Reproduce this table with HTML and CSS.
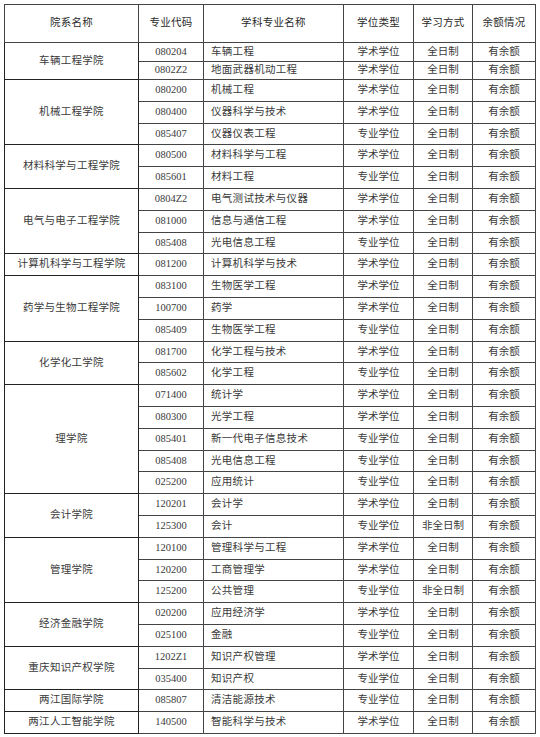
FILE: index.html
```html
<!DOCTYPE html>
<html lang="zh">
<head>
<meta charset="utf-8">
<link rel="stylesheet" href="styles.css">
</head>
<body>
<table class="tbl">
<colgroup>
<col class="c1"><col class="c2"><col class="c3"><col class="c4"><col class="c5"><col class="c6">
</colgroup>
<thead>
<tr class="head"><th>院系名称</th><th>专业代码</th><th>学科专业名称</th><th>学位类型</th><th>学习方式</th><th>余额情况</th></tr>
</thead>
<tbody>
<tr class="r19"><td class="dept" rowspan="2">车辆工程学院</td><td class="code">080204</td><td class="name">车辆工程</td><td>学术学位</td><td>全日制</td><td>有余额</td></tr>
<tr class="r18"><td class="code">0802Z2</td><td class="name">地面武器机动工程</td><td>学术学位</td><td>全日制</td><td>有余额</td></tr>

<tr><td class="dept" rowspan="3">机械工程学院</td><td class="code">080200</td><td class="name">机械工程</td><td>学术学位</td><td>全日制</td><td>有余额</td></tr>
<tr><td class="code">080400</td><td class="name">仪器科学与技术</td><td>学术学位</td><td>全日制</td><td>有余额</td></tr>
<tr><td class="code">085407</td><td class="name">仪器仪表工程</td><td>专业学位</td><td>全日制</td><td>有余额</td></tr>

<tr><td class="dept" rowspan="2">材料科学与工程学院</td><td class="code">080500</td><td class="name">材料科学与工程</td><td>学术学位</td><td>全日制</td><td>有余额</td></tr>
<tr><td class="code">085601</td><td class="name">材料工程</td><td>专业学位</td><td>全日制</td><td>有余额</td></tr>

<tr><td class="dept" rowspan="3">电气与电子工程学院</td><td class="code">0804Z2</td><td class="name">电气测试技术与仪器</td><td>学术学位</td><td>全日制</td><td>有余额</td></tr>
<tr><td class="code">081000</td><td class="name">信息与通信工程</td><td>学术学位</td><td>全日制</td><td>有余额</td></tr>
<tr><td class="code">085408</td><td class="name">光电信息工程</td><td>专业学位</td><td>全日制</td><td>有余额</td></tr>

<tr><td class="dept">计算机科学与工程学院</td><td class="code">081200</td><td class="name">计算机科学与技术</td><td>学术学位</td><td>全日制</td><td>有余额</td></tr>

<tr><td class="dept" rowspan="3">药学与生物工程学院</td><td class="code">083100</td><td class="name">生物医学工程</td><td>学术学位</td><td>全日制</td><td>有余额</td></tr>
<tr><td class="code">100700</td><td class="name">药学</td><td>学术学位</td><td>全日制</td><td>有余额</td></tr>
<tr><td class="code">085409</td><td class="name">生物医学工程</td><td>专业学位</td><td>全日制</td><td>有余额</td></tr>

<tr><td class="dept" rowspan="2">化学化工学院</td><td class="code">081700</td><td class="name">化学工程与技术</td><td>学术学位</td><td>全日制</td><td>有余额</td></tr>
<tr><td class="code">085602</td><td class="name">化学工程</td><td>专业学位</td><td>全日制</td><td>有余额</td></tr>

<tr><td class="dept" rowspan="5">理学院</td><td class="code">071400</td><td class="name">统计学</td><td>学术学位</td><td>全日制</td><td>有余额</td></tr>
<tr><td class="code">080300</td><td class="name">光学工程</td><td>学术学位</td><td>全日制</td><td>有余额</td></tr>
<tr><td class="code">085401</td><td class="name">新一代电子信息技术</td><td>专业学位</td><td>全日制</td><td>有余额</td></tr>
<tr><td class="code">085408</td><td class="name">光电信息工程</td><td>专业学位</td><td>全日制</td><td>有余额</td></tr>
<tr><td class="code">025200</td><td class="name">应用统计</td><td>专业学位</td><td>全日制</td><td>有余额</td></tr>

<tr><td class="dept" rowspan="2">会计学院</td><td class="code">120201</td><td class="name">会计学</td><td>学术学位</td><td>全日制</td><td>有余额</td></tr>
<tr><td class="code">125300</td><td class="name">会计</td><td>专业学位</td><td>非全日制</td><td>有余额</td></tr>

<tr><td class="dept" rowspan="3">管理学院</td><td class="code">120100</td><td class="name">管理科学与工程</td><td>学术学位</td><td>全日制</td><td>有余额</td></tr>
<tr><td class="code">120200</td><td class="name">工商管理学</td><td>学术学位</td><td>全日制</td><td>有余额</td></tr>
<tr><td class="code">125200</td><td class="name">公共管理</td><td>专业学位</td><td>非全日制</td><td>有余额</td></tr>

<tr><td class="dept" rowspan="2">经济金融学院</td><td class="code">020200</td><td class="name">应用经济学</td><td>学术学位</td><td>全日制</td><td>有余额</td></tr>
<tr><td class="code">025100</td><td class="name">金融</td><td>专业学位</td><td>全日制</td><td>有余额</td></tr>

<tr><td class="dept" rowspan="2">重庆知识产权学院</td><td class="code">1202Z1</td><td class="name">知识产权管理</td><td>学术学位</td><td>全日制</td><td>有余额</td></tr>
<tr><td class="code">035400</td><td class="name">知识产权</td><td>专业学位</td><td>全日制</td><td>有余额</td></tr>

<tr><td class="dept">两江国际学院</td><td class="code">085807</td><td class="name">清洁能源技术</td><td>专业学位</td><td>全日制</td><td>有余额</td></tr>

<tr><td class="dept">两江人工智能学院</td><td class="code">140500</td><td class="name">智能科学与技术</td><td>学术学位</td><td>全日制</td><td>有余额</td></tr>
</tbody>
</table>
</body>
</html>
```
FILE: styles.css
```css
html, body {
  margin: 0;
  padding: 0;
  background: #ffffff;
}
body {
  padding: 4px 0 0 4px;
  font-family: "Liberation Serif", "Noto Sans CJK SC", serif;
  font-size: 10.5px;
  color: #3a3a3a;
}
.tbl {
  border-collapse: collapse;
  table-layout: fixed;
  width: 531px;
  border: 1.5px solid #333;
}
.c1 { width: 134px; }
.c2 { width: 65px; }
.c3 { width: 140px; }
.c4 { width: 70px; }
.c5 { width: 59px; }
.c6 { width: 63px; }
.tbl th, .tbl td {
  border: 1px solid #444;
  padding: 0;
  text-align: center;
  vertical-align: middle;
  font-weight: normal;
  line-height: 1.2;
  white-space: nowrap;
}
.tbl th {
  color: #2a2a2a;
  letter-spacing: 0.3px;
}
.head th { height: 37px; }
.tbl tbody tr td { height: 20.8px; }
.tbl tbody tr.r19 td { height: 18px; }
.tbl tbody tr.r18 td { height: 17px; }
.tbl td.dept {
  border-color: #222;
  letter-spacing: 0.3px;
}
.tbl td.name {
  text-align: left;
  padding-left: 7px;
  letter-spacing: 0.3px;
}
```
